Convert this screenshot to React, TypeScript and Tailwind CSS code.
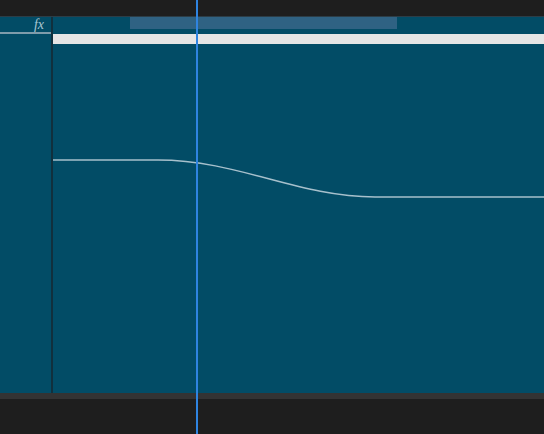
export default function App() {
  // keyframe curve, in chart-local pixels
  const curve = "M0,116 L105,116 C185,116 245,153 322,153 L491,153";

  return (
    <div className="relative w-[544px] h-[434px] bg-[#1e1e1e] overflow-hidden flex flex-col font-['Liberation_Sans',sans-serif]">
      {/* timeline header strip */}
      <div className="h-[17px] shrink-0 bg-[#1e1e1e] border-b border-[#2c3d47]" />

      <div className="h-[376px] shrink-0 flex bg-[#024c66]">
        {/* parameter column */}
        <div className="w-[51px] flex flex-col">
          <div className="h-[15px] flex items-center justify-end pr-[7px]">
            <span className="text-[14px] italic text-[#a9c6d3] font-['Liberation_Serif',serif] leading-none">
              fx
            </span>
          </div>
          <div className="h-[2px] bg-[#7f9cab]" />
        </div>
        <div className="w-[2px] bg-[#11303d]" />

        {/* graph area */}
        <div className="flex-1 flex flex-col">
          <div className="h-[12px] pl-[77px]">
            <div className="w-[267px] h-full bg-[#2f6283]" />
          </div>
          <div className="h-[5px]" />
          <div className="h-[10px] bg-[#e5e5e5]" />
          <div className="flex-1 relative">
            <svg className="absolute inset-0" width="491" height="349" viewBox="0 0 491 349">
              <path d={curve} fill="none" stroke="#a7c0cc" strokeWidth="1.5" />
            </svg>
          </div>
        </div>
      </div>

      <div className="h-[6px] shrink-0 bg-[#333333]" />
      <div className="flex-1 bg-[#1e1e1e]" />

      {/* playhead */}
      <div className="absolute top-0 bottom-0 left-[196px] w-[2px] bg-[#2f84e0]" />
    </div>
  );
}
